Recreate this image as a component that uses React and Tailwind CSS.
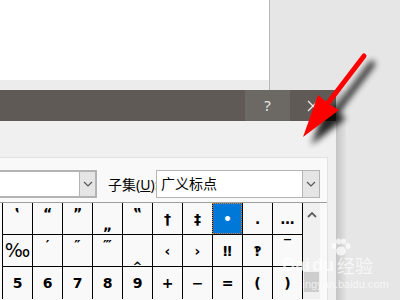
import React from "react";

const row1 = ["‛", "“", "”", "„", "‟", "†", "‡", "•", "․", "…"];
const row2 = ["‰", "′", "″", "‴", "‸", "‹", "›", "‼", "‽", "‾"];
const row3 = ["5", "6", "7", "8", "9", "+", "−", "=", "(", ")"];

function Cell({ ch, selected, align, big }) {
  return (
    <div
      className={
        "w-[30px] h-full border-l border-black flex justify-center " +
        (big ? "text-[19px] font-normal " : "") +
        (align === "bottom" ? "items-end pb-[2px] " : align === "top" ? "items-start pt-[3px] " : "items-center ") +
        (selected ? "bg-[#0078d7] text-white outline-1 outline-dotted outline-[#e08020] -outline-offset-1" : "text-black")
      }
    >
      {ch}
    </div>
  );
}

function Row({ chars, sel, aligns = {}, bigs = {}, last }) {
  return (
    <div className={"flex h-[32px] border-black " + (last ? "" : "border-b")}>
      {chars.map((c, i) => (
        <Cell key={i} ch={c} selected={i === sel} align={aligns[i]} big={bigs[i]} />
      ))}
      <div className="border-l border-black" />
    </div>
  );
}

function Chevron() {
  return (
    <svg width="10" height="6" viewBox="0 0 10 6">
      <path d="M1 1 L5 5 L9 1" fill="none" stroke="#555" strokeWidth="1.2" />
    </svg>
  );
}

export default function App() {
  return (
    <div
      className="relative w-[400px] h-[300px] overflow-hidden bg-[#e6e6e6] flex flex-col"
      style={{ fontFamily: '"Noto Sans", "Noto Sans CJK SC", sans-serif' }}
    >
      {/* top document area */}
      <div className="flex h-[90px] shrink-0">
        <div className="w-[270px] flex flex-col border-r border-[#b8b8b8]">
          <div className="h-[80px] bg-white" />
          <div className="flex-1 bg-[#ececec]" />
        </div>
        <div className="flex-1 bg-[#e6e6e6]" />
      </div>

      {/* dialog row */}
      <div className="flex flex-1 min-h-0">
        <div className="w-[336px] flex flex-col">
          {/* title bar */}
          <div className="h-[31px] bg-[#5f5a56] flex justify-end text-[#e8e8e8]">
            <div className="w-[45px] bg-[#6c6864] flex items-center justify-center text-[15px]">?</div>
            <div className="w-[46px] flex items-center justify-center">
              <svg width="12" height="12" viewBox="0 0 12 12">
                <path d="M1 1 L11 11 M11 1 L1 11" stroke="#ececec" strokeWidth="1.3" />
              </svg>
            </div>
          </div>
          {/* body */}
          <div className="flex-1 bg-[#f0f0f0] pt-[36px] pr-[8px] flex flex-col">
            <div className="flex-1 bg-[#f9f9f9] border-t border-r border-[#e2e2e2] flex flex-col">
              {/* dropdown row */}
              <div className="flex items-center h-[28px] mt-[12px]">
                <div className="ml-[-10px] w-[107px] h-full border-2 border-[#b4b4b4] bg-white flex justify-end">
                  <div className="w-[16px] bg-[#e5e5e5] border-l border-[#b4b4b4] flex items-center justify-center">
                    <Chevron />
                  </div>
                </div>
                <div className="ml-[11px] text-[14px] text-black w-[48px] whitespace-nowrap">
                  子集(<span className="underline">U</span>):
                </div>
                <div className="w-[164px] h-full border border-[#b4b4b4] bg-white flex justify-between">
                  <span className="pl-[4px] text-[14px] text-black leading-[26px]">广义标点</span>
                  <div className="w-[17px] bg-[#e5e5e5] border-l border-[#b4b4b4] flex items-center justify-center">
                    <Chevron />
                  </div>
                </div>
              </div>
              {/* grid area */}
              <div className="mt-[4px] border-t border-[#a0a0a0] flex">
                <div
                  className="ml-[2px] flex flex-col text-[14px] font-bold leading-none"
                  style={{ fontFamily: '"DejaVu Sans", "Noto Sans", sans-serif' }}
                >
                  <Row chars={row1} sel={7} aligns={{ 3: "bottom", 0: "top", 1: "top", 2: "top", 4: "top" }} />
                  <Row chars={row2} bigs={{ 0: true }} aligns={{ 4: "bottom", 1: "top", 2: "top", 3: "top", 9: "top" }} />
                  <Row chars={row3} last />
                </div>
                <div className="w-[17px] bg-[#f0f0f0] flex flex-col items-center">
                  <svg className="mt-[8px]" width="10" height="7" viewBox="0 0 10 7">
                    <path d="M1 6 L5 2 L9 6" fill="none" stroke="#606060" strokeWidth="1.8" />
                  </svg>
                  <div className="mt-[54px] w-[15px] h-[20px] bg-[#cdcdcd]" />
                </div>
              </div>
            </div>
          </div>
        </div>
        {/* shadow strip */}
        <div className="w-[10px] bg-gradient-to-r from-[#c4c4c4] to-[#e2e2e2]" />
        <div className="flex-1 bg-[#e6e6e6]" />
      </div>

      {/* watermark */}
      <div className="absolute left-[282px] top-[238px] text-white/70 pointer-events-none select-none">
        <svg className="ml-[48px]" width="22" height="18" viewBox="0 0 22 18">
          <g fill="rgba(255,255,255,0.7)">
            <ellipse cx="4" cy="8" rx="2.5" ry="3" />
            <ellipse cx="8.5" cy="3.5" rx="2.5" ry="3" />
            <ellipse cx="13.5" cy="3.5" rx="2.5" ry="3" />
            <ellipse cx="18" cy="8" rx="2.5" ry="3" />
            <ellipse cx="11" cy="13" rx="5" ry="4.5" />
          </g>
        </svg>
        <div className="flex items-end">
          <span className="text-[18px] font-bold leading-none" style={{ fontFamily: '"Liberation Sans", sans-serif' }}>Bai</span>
          <span className="text-[18px] font-bold leading-none ml-[2px]" style={{ fontFamily: '"Liberation Sans", sans-serif' }}>du</span>
          <span className="text-[18px] leading-none ml-[3px]" style={{ fontFamily: '"Noto Sans CJK SC", sans-serif' }}>经验</span>
        </div>
        <div className="text-[11px] leading-none mt-[5px] ml-[18px]" style={{ fontFamily: '"Liberation Sans", sans-serif' }}>jingyan.baidu.com</div>
      </div>

      {/* red arrow */}
      <svg className="absolute left-0 top-0 pointer-events-none" width="400" height="300" viewBox="0 0 400 300">
        <defs>
          <filter id="blur" x="-50%" y="-50%" width="200%" height="200%">
            <feGaussianBlur stdDeviation="3" />
          </filter>
        </defs>
        <g transform="translate(8,8)" filter="url(#blur)" opacity="0.85">
          <path d="M364 56 L327 105" stroke="#000" strokeWidth="6" strokeLinecap="round" />
          <polygon points="303,137 319,96 328,104 338,110" fill="#000" />
        </g>
        <path d="M364 56 L325 107" stroke="#ff0000" strokeWidth="5" strokeLinecap="round" />
        <polygon points="303,137 318,95 329,104 339,110" fill="#ff0000" />
      </svg>
    </div>
  );
}
